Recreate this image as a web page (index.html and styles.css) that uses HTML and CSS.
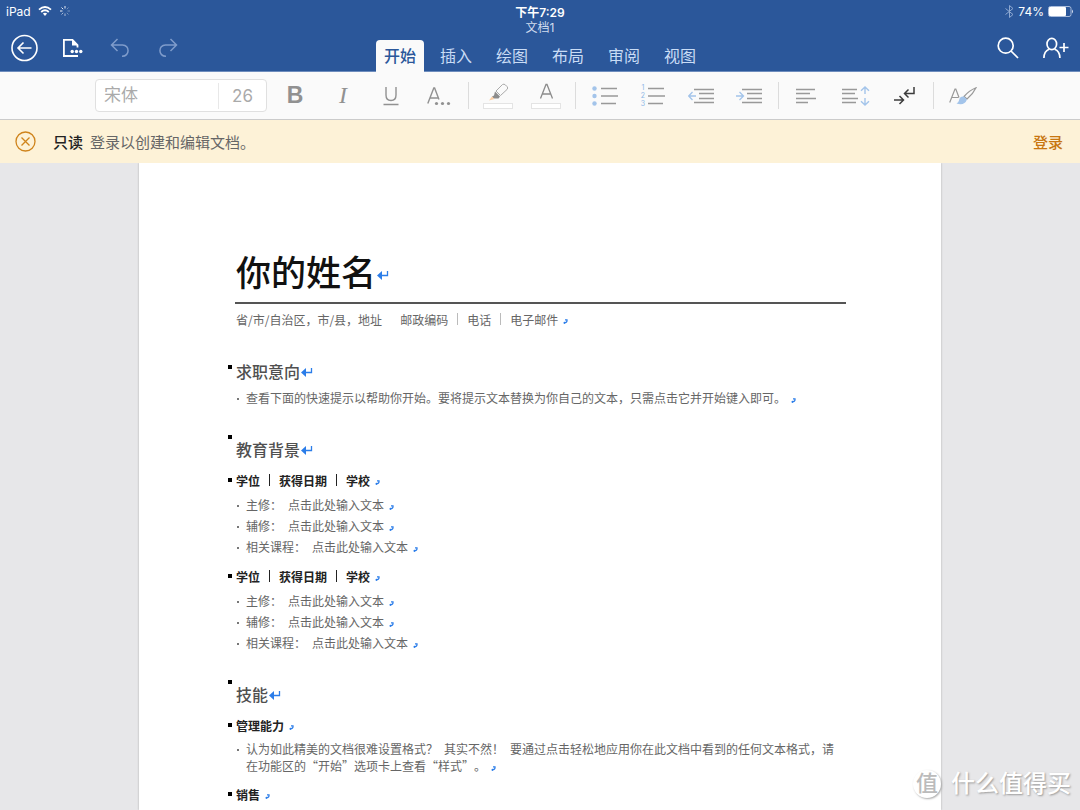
FILE: index.html
```html
<!DOCTYPE html>
<html lang="zh-CN">
<head>
<meta charset="utf-8">
<meta name="viewport" content="width=device-width, initial-scale=1">
<title>文档1</title>
<link rel="stylesheet" href="styles.css">
</head>
<body>
<svg class="defs" aria-hidden="true">
  <symbol id="return" viewBox="0 0 12 10"><path d="M0 5.500 5 1V10Z" fill="#2b7de9"/><path d="M4 5.500H10.500V1" fill="none" stroke="#2b7de9" stroke-width="1.300"/></symbol>
  <symbol id="mark" viewBox="0 0 5 5"><path d="M2 .800H4Q4.500 3.500 1 4" fill="none" stroke="#2b7de9" stroke-width="1.300"/><path d="M0 4 2 2.500V5Z" fill="#2b7de9"/></symbol>
</svg>
<header class="header">
  <div class="status">
    <div class="status-left">
      <span>iPad</span>
      <svg width="14" height="10" viewBox="0 0 14 10" fill="none" stroke="#fff" stroke-width="1.800"><path d="M1 3.700Q7-1.700 13 3.700M3.200 6Q7 2.600 10.800 6"/><path d="M4.900 7.600Q7 5.900 9.100 7.600L7 9.900Z" fill="#fff" stroke="none"/></svg>
      <svg width="12" height="12" viewBox="0 0 12 12" stroke="#fff" stroke-width="1"><path d="M6 1V3.500M2.500 2.500 4.200 4.200M1 6H3.500" opacity=".9"/><path d="M2.500 9.500 4.200 7.800M6 8.500V11" opacity=".6"/><path d="M7.800 7.800 9.500 9.500M8.500 6H11M7.800 4.200 9.500 2.500" opacity=".35"/></svg>
    </div>
    <time class="clock">下午7:29</time>
    <div class="status-right">
      <svg width="9" height="13" viewBox="0 0 9 13" fill="none" stroke="#8fa9d1" stroke-width="1"><path d="M.500 3.500 8 9.500 4.500 12.500V.500L8 3.500 .500 9.500"/></svg>
      <span>74%</span>
      <svg width="26" height="11" viewBox="0 0 26 11"><rect x=".5" y=".5" width="22.500" height="10" rx="2" fill="none" stroke="#a9bcdc"/><rect x="1" y="1" width="17" height="9" rx="1" fill="#fff"/><path d="M24 3.500Q26 5.500 24 7.500Z" fill="#d5deee"/></svg>
    </div>
  </div>
  <div class="ribbon">
    <div class="actions">
      <button type="button" class="action" aria-label="返回"><svg width="28" height="28" viewBox="0 0 28 28" fill="none" stroke="#fff" stroke-width="1.600"><circle cx="14.500" cy="14" r="12.500"/><path d="M21.500 14H8M13.500 8.500 8 14 13.500 19.500"/></svg></button>
      <button type="button" class="action" aria-label="文件"><svg width="20" height="20" viewBox="0 0 20 20" fill="none" stroke="#fff" stroke-width="1.800"><path d="M16 18H1.900V1.900H10.500L15.500 7V9.500"/><path d="M10 1V7.500H16Z" fill="#fff" stroke="none"/><g fill="#fff" stroke="none"><circle cx="10.200" cy="13.500" r="1.700"/><circle cx="14.500" cy="13.500" r="1.700"/><circle cx="18.800" cy="13.500" r="1.700"/></g></svg></button>
      <button type="button" class="action" aria-label="撤消"><svg width="20" height="20" viewBox="0 0 20 20" fill="none" stroke="#7f9ccb" stroke-width="1.500"><path d="M7.500 1 1.500 7 7.500 13M1.500 7H12.500C20 7 20 18.500 12 18.300"/></svg></button>
      <button type="button" class="action" aria-label="恢复"><svg width="20" height="20" viewBox="0 0 20 20" fill="none" stroke="#7f9ccb" stroke-width="1.500"><path d="M12.500 1 18.500 7 12.500 13M18.500 7H7.500C0 7 0 18.500 8 18.300"/></svg></button>
    </div>
    <div class="center">
      <h1 class="doc-name">文档1</h1>
      <nav class="tabs">
        <button type="button" class="tab tab-active">开始</button>
        <button type="button" class="tab">插入</button>
        <button type="button" class="tab">绘图</button>
        <button type="button" class="tab">布局</button>
        <button type="button" class="tab">审阅</button>
        <button type="button" class="tab">视图</button>
      </nav>
    </div>
    <div class="actions actions-end">
      <button type="button" class="action" aria-label="搜索"><svg width="22" height="22" viewBox="0 0 22 22" fill="none" stroke="#fff" stroke-width="1.700"><circle cx="8.700" cy="8.700" r="7.500"/><path d="M14 14 21 21"/></svg></button>
      <button type="button" class="action" aria-label="共享"><svg width="26" height="22" viewBox="0 0 26 22" fill="none" stroke="#fff" stroke-width="1.700"><ellipse cx="8.800" cy="7" rx="4.800" ry="5.700"/><path d="M.900 21C1 16.500 3 13.500 6 12.300M11.600 12.300C15 13.500 16.800 16.500 16.900 21M16.500 10.500H25.500M21 6V15"/></svg></button>
    </div>
  </div>
</header>

<div class="toolbar">
  <div class="font-box">
    <input class="font-name" type="text" value="宋体" aria-label="字体">
    <input class="font-size" type="text" value="26" aria-label="字号">
  </div>
  <button type="button" class="tool tool-bold" aria-label="加粗">B</button>
  <button type="button" class="tool tool-italic" aria-label="倾斜">I</button>
  <button type="button" class="tool" aria-label="下划线"><svg width="16" height="20" viewBox="0 0 16 20" fill="none" stroke="#919191" stroke-width="1.400"><path d="M3 1V9Q3 14.500 8 14.500T13 9V1M.500 18.500H15.500"/></svg></button>
  <button type="button" class="tool" aria-label="字体格式"><svg width="24" height="20" viewBox="0 0 24 20" fill="none" stroke="#919191" stroke-width="1.400"><path d="M.800 17.500 6.800 2H7.600L12 13.500M3 12H11"/><g fill="#919191" stroke="none"><circle cx="9.500" cy="17.500" r="1.600"/><circle cx="15.500" cy="17.500" r="1.600"/><circle cx="21.500" cy="17.500" r="1.600"/></g></svg></button>
  <span class="divider"></span>
  <button type="button" class="tool" aria-label="突出显示"><svg width="30" height="26" viewBox="0 0 30 26" fill="none"><path d="M13 8 19.500 1.500Q21 .500 22.500 2L24 3.500Q25.500 5 24 6.500L17.500 12.500Z" stroke="#aaa"/><path d="M12 8.500 17 13.500 15.500 15.500 10.500 15.500 9 13.500 11 12.500Z" fill="#8c8c8c"/><path d="M9 13.500 11.500 16 6 17.500Z" fill="#fbcfa5"/><rect x=".5" y="20.500" width="29" height="5" fill="#fff" stroke="#e4e4e4"/></svg></button>
  <button type="button" class="tool" aria-label="字体颜色"><svg width="30" height="26" viewBox="0 0 30 26" fill="none"><path d="M9.500 15.500 15 1.500H16L21.500 15.500M11.500 11H19.500" stroke="#8c8c8c" stroke-width="1.300"/><rect x=".5" y="20.500" width="29" height="5" fill="#fff" stroke="#e4e4e4"/></svg></button>
  <span class="divider"></span>
  <button type="button" class="tool" aria-label="项目符号"><svg width="26" height="20" viewBox="0 0 26 20"><g fill="#a3c4ea"><circle cx="2.500" cy="2.500" r="2.200"/><circle cx="2.500" cy="10" r="2.200"/><circle cx="2.500" cy="17.500" r="2.200"/></g><path d="M9 2.500H25M9 10H26M9 17.500H24" stroke="#999" stroke-width="1.300"/></svg></button>
  <button type="button" class="tool numbering" aria-label="编号"><span class="digits"><span>1</span><span>2</span><span>3</span></span><svg width="18" height="20" viewBox="0 0 18 20"><path d="M1 2.500H17M1 10H18M1 17.500H16" stroke="#999" stroke-width="1.300"/></svg></button>
  <button type="button" class="tool" aria-label="减少缩进"><svg width="26" height="16" viewBox="0 0 26 16" fill="none"><path d="M6 1.500H26M11 5.500H26M11 10.500H26M6 14.500H26" stroke="#999" stroke-width="1.300"/><path d="M8 8H.800M4.500 4 .700 8 4.500 12" stroke="#a3c4ea" stroke-width="1.300"/></svg></button>
  <button type="button" class="tool" aria-label="增加缩进"><svg width="26" height="16" viewBox="0 0 26 16" fill="none"><path d="M6 1.500H26M11 5.500H26M11 10.500H26M6 14.500H26" stroke="#999" stroke-width="1.300"/><path d="M0 8H7.500M3.500 4 7.500 8 3.500 12" stroke="#a3c4ea" stroke-width="1.300"/></svg></button>
  <span class="divider"></span>
  <button type="button" class="tool" aria-label="左对齐"><svg width="24" height="16" viewBox="0 0 24 16"><path d="M0 1.500H19M0 5.500H14M0 10.500H20M0 14.500H12" stroke="#999" stroke-width="1.300"/></svg></button>
  <button type="button" class="tool" aria-label="行距"><svg width="28" height="20" viewBox="0 0 28 20" fill="none"><path d="M0 3.500H15M0 7.500H13M0 12.500H16M0 16.500H14" stroke="#999" stroke-width="1.300"/><path d="M23 1V8M19 4.800 23 1 27 4.800M23 12V19M19 15.200 23 19 27 15.200" stroke="#a3c4ea" stroke-width="1.400"/></svg></button>
  <button type="button" class="tool" aria-label="段落标记"><svg width="21" height="18" viewBox="0 0 21 18" fill="none" stroke="#3c3c3c" stroke-width="1.500"><path d="M20 0V6.500H11M14.500 2.500 10.500 6.500 14.500 10.500M0 13H9M5.500 9 9.500 13 5.500 17"/></svg></button>
  <span class="divider"></span>
  <button type="button" class="tool" aria-label="样式"><svg width="28" height="18" viewBox="0 0 28 18" fill="none" stroke="#999" stroke-width="1.200"><path d="M.700 15.500 6 2H6.800L10 10.500M2.800 10.500H9.500"/><path d="M15 9.500Q20 3.500 27 .700Q24 7 18 12Z"/><path d="M15 9.500Q10.500 9 10 13.500 9.500 15.500 7.500 16.500 15.500 19 18 12.500Z" fill="#a3c4ea" stroke="none"/></svg></button>
</div>

<section class="notice">
  <button type="button" class="notice-close" aria-label="关闭"><svg width="21" height="21" viewBox="0 0 21 21" fill="none" stroke="#cf841c" stroke-width="1.300"><circle cx="10.500" cy="10.500" r="9.500"/><path d="M6.500 6.500 14.500 14.500M14.500 6.500 6.500 14.500"/></svg></button>
  <strong class="notice-title">只读</strong>
  <span class="notice-text">登录以创建和编辑文档。</span>
  <a class="notice-link" href="#">登录</a>
</section>

<main class="canvas">
  <article class="page">
    <h2 class="name">你的姓名<svg class="return" width="12" height="10"><use href="#return"/></svg></h2>
    <p class="contact"><span class="address">省/市/自治区，市/县，地址</span><span>邮政编码</span><i class="bar"></i><span>电话</span><i class="bar"></i><span>电子邮件</span><svg class="mark" width="5" height="5"><use href="#mark"/></svg></p>

    <h3 class="heading heading-first"><span>求职意向</span><svg class="return" width="12" height="10"><use href="#return"/></svg></h3>
    <ul class="list list-intro">
      <li>查看下面的快速提示以帮助你开始。要将提示文本替换为你自己的文本，只需点击它并开始键入即可。<svg class="mark" width="5" height="5"><use href="#mark"/></svg></li>
    </ul>

    <h3 class="heading"><span>教育背景</span><svg class="return" width="12" height="10"><use href="#return"/></svg></h3>
    <h4 class="subhead subhead-first"><span>学位</span><i class="bar"></i><span>获得日期</span><i class="bar"></i><span>学校</span><svg class="mark" width="5" height="5"><use href="#mark"/></svg></h4>
    <ul class="list">
      <li>主修：&ensp;点击此处输入文本<svg class="mark" width="5" height="5"><use href="#mark"/></svg></li>
      <li>辅修：&ensp;点击此处输入文本<svg class="mark" width="5" height="5"><use href="#mark"/></svg></li>
      <li>相关课程：&ensp;点击此处输入文本<svg class="mark" width="5" height="5"><use href="#mark"/></svg></li>
    </ul>
    <h4 class="subhead"><span>学位</span><i class="bar"></i><span>获得日期</span><i class="bar"></i><span>学校</span><svg class="mark" width="5" height="5"><use href="#mark"/></svg></h4>
    <ul class="list">
      <li>主修：&ensp;点击此处输入文本<svg class="mark" width="5" height="5"><use href="#mark"/></svg></li>
      <li>辅修：&ensp;点击此处输入文本<svg class="mark" width="5" height="5"><use href="#mark"/></svg></li>
      <li>相关课程：&ensp;点击此处输入文本<svg class="mark" width="5" height="5"><use href="#mark"/></svg></li>
    </ul>

    <h3 class="heading"><span>技能</span><svg class="return" width="12" height="10"><use href="#return"/></svg></h3>
    <h4 class="subhead subhead-first"><span>管理能力</span><svg class="mark" width="5" height="5"><use href="#mark"/></svg></h4>
    <ul class="list list-tight">
      <li>认为如此精美的文档很难设置格式？&ensp;其实不然！&ensp;要通过点击轻松地应用你在此文档中看到的任何文本格式，请<br>在功能区的“开始”选项卡上查看“样式”。<svg class="mark" width="5" height="5"><use href="#mark"/></svg></li>
    </ul>
    <h4 class="subhead"><span>销售</span><svg class="mark" width="5" height="5"><use href="#mark"/></svg></h4>
  </article>
</main>
<div class="watermark"><span class="watermark-badge">值</span><span>什么值得买</span></div>
</body>
</html>
```

FILE: styles.css
```css
* {
  box-sizing: border-box;
  margin: 0;
  padding: 0;
}

body {
  display: flex;
  flex-direction: column;
  height: 100vh;
  overflow: hidden;
  background: #e7e7e9;
  font-family: Inter, "Noto Sans CJK SC", sans-serif;
}

button {
  border: 0;
  background: none;
  font: inherit;
}

svg {
  flex: none;
}

.defs {
  position: absolute;
  width: 0;
  height: 0;
}

/* Header */
.header {
  flex: none;
  background: #2b579a;
  border-bottom: 1px solid #6e8dbd;
  color: #fff;
}

.status {
  display: grid;
  grid-template-columns: 1fr auto 1fr;
  align-items: center;
  height: 22px;
  padding: 0 6px;
  font-size: 12px;
}

.status-left,
.status-right {
  display: flex;
  align-items: center;
  gap: 6px;
}

.status-left {
  gap: 7px;
}

.status-right {
  justify-content: flex-end;
  gap: 4px;
}

.clock {
  font-weight: 600;
}

.ribbon {
  display: grid;
  grid-template-columns: 1fr auto 1fr;
  height: 49px;
}

.actions {
  display: flex;
  align-items: center;
  padding-top: 2px;
}

.actions-end {
  justify-content: flex-end;
}

.action,
.tool {
  display: flex;
  align-items: center;
  justify-content: center;
  width: 48px;
  height: 47px;
}

.action svg {
  overflow: visible;
}

.center {
  display: flex;
  flex-direction: column;
  align-items: center;
  gap: 6px;
}

.doc-name {
  color: #d0dcef;
  font-size: 12px;
  font-weight: 400;
  line-height: 12px;
}

.tabs {
  display: flex;
  gap: 8px;
}

.tab {
  height: 32px;
  padding: 0 8px;
  border-radius: 4px 4px 0 0;
  color: #c9dcf5;
  font-size: 16px;
  line-height: 30px;
}

.tab-active {
  background: #fafafa;
  color: #2b579a;
  font-weight: 500;
}

/* Formatting toolbar */
.toolbar {
  display: flex;
  flex: none;
  align-items: center;
  justify-content: center;
  height: 48px;
  padding-left: 2px;
  background: #fafafa;
  border-bottom: 1px solid #cbcbcb;
}

.font-box {
  display: flex;
  align-items: center;
  width: 172px;
  height: 33px;
  margin-right: 4px;
  border: 1px solid #e0e0e0;
  border-radius: 4px;
  background: #fff;
}

.font-box input {
  height: 26px;
  border: 0;
  background: none;
  color: #aaa;
  font-family: inherit;
}

.font-name {
  flex: 1;
  min-width: 0;
  padding: 0 0 4px 8px;
  font-size: 17px;
}

.font-box .font-size {
  width: 48px;
  border-left: 1px solid #e8e8e8;
  font-size: 17px;
  text-align: center;
}

.tool {
  flex: none;
  color: #919191;
}

.tool-bold {
  font-family: "Liberation Sans", sans-serif;
  font-size: 23px;
  font-weight: 700;
}

.tool-italic {
  font-family: "Liberation Serif", serif;
  font-size: 24px;
  font-style: italic;
}

.numbering {
  gap: 2px;
}

.digits {
  display: grid;
  color: #8fb8e6;
  font-size: 7px;
  line-height: 8px;
}

.divider {
  width: 1px;
  height: 27px;
  margin: 0 5px;
  background: #dcdcdc;
}

/* Read-only notice */
.notice {
  display: flex;
  flex: none;
  align-items: center;
  height: 43px;
  padding: 0 17px 0 15px;
  background: #fdf2d7;
  font-size: 15px;
}

.notice-close {
  display: flex;
  margin-right: 17px;
}

.notice-title {
  margin-right: 7px;
  color: #222;
  font-weight: 500;
}

.notice-text {
  color: #666;
}

.notice-link {
  margin-left: auto;
  color: #c8760f;
  font-weight: 500;
  text-decoration: none;
}

/* Document */
.canvas {
  flex: 1;
  min-height: 0;
  overflow: hidden;
}

.page {
  max-width: 802px;
  min-height: 100%;
  margin: 0 auto;
  padding: 87px 95px 0 96px;
  background: #fff;
  box-shadow: 0 0 2px #aaa;
  color: #666;
  font-family: "Noto Sans CJK SC", sans-serif;
  font-size: 12px;
  text-spacing-trim: space-all;
}

.name {
  padding: 0 0 10px 1px;
  border-bottom: 2px solid #555;
  color: #111;
  font-size: 35px;
  font-weight: 500;
  line-height: 42px;
}

.name .return {
  margin-left: 1px;
  vertical-align: 6px;
}

.contact {
  display: flex;
  align-items: center;
  gap: 9px;
  height: 20px;
  margin-top: 5px;
  padding-left: 1px;
}

.address {
  margin-right: 9px;
}

.bar {
  width: 1px;
  height: 12px;
  background: currentColor;
}

.contact .bar {
  background: #bbb;
}

.contact .mark,
.subhead .mark {
  margin: 4px 0 0 -4px;
}

.heading {
  display: flex;
  align-items: flex-end;
  margin: 26px 0 0 -7px;
  padding-top: 8px;
  color: #505050;
  font-size: 16px;
  font-weight: 500;
  line-height: 12px;
  padding-bottom: 2px;
}

.heading::before,
.subhead::before {
  width: 4px;
  height: 4px;
  background: #000;
  content: "";
}

.heading::before {
  align-self: flex-start;
  margin: -8px 4px 0 0;
}

.heading-first {
  margin-top: 36px;
  padding-top: 0;
}

.heading-first::before {
  margin-top: 0;
}

.heading .return {
  margin-left: 1px;
}

.subhead {
  display: flex;
  align-items: center;
  gap: 9px;
  height: 20px;
  margin: 8px 0 0 -7px;
  color: #222;
  font-size: 12px;
  font-weight: 600;
}

.subhead::before {
  margin-right: -5px;
}

.subhead-first {
  margin-top: 13px;
}

.list {
  margin-top: 4px;
  padding-bottom: 1px;
  list-style: none;
}

.list li {
  display: block;
  padding: 2px 0 2px 11px;
  line-height: 17px;
}

.list li::before {
  display: inline-block;
  width: 2px;
  height: 2px;
  margin: 0 7px 0 -9px;
  background: #777;
  vertical-align: 3px;
  content: "";
}

.list .mark {
  margin-left: 5px;
}

.list-intro {
  margin-top: 8px;
}

.list-tight {
  margin-top: 3px;
  padding-bottom: 0;
}

/* Watermark over the document */
.watermark {
  position: absolute;
  right: 9px;
  bottom: 8px;
  display: flex;
  align-items: center;
  gap: 10px;
  color: #fff;
  font-size: 24px;
  font-weight: 500;
  line-height: 36px;
  text-shadow: 1px 1px 2px #999;
}

.watermark-badge {
  width: 28px;
  height: 28px;
  border-radius: 50%;
  background: #fff;
  box-shadow: 1px 1px 2px #aaa;
  color: #bbb;
  font-size: 22px;
  line-height: 26px;
  text-align: center;
  text-shadow: none;
}
```
